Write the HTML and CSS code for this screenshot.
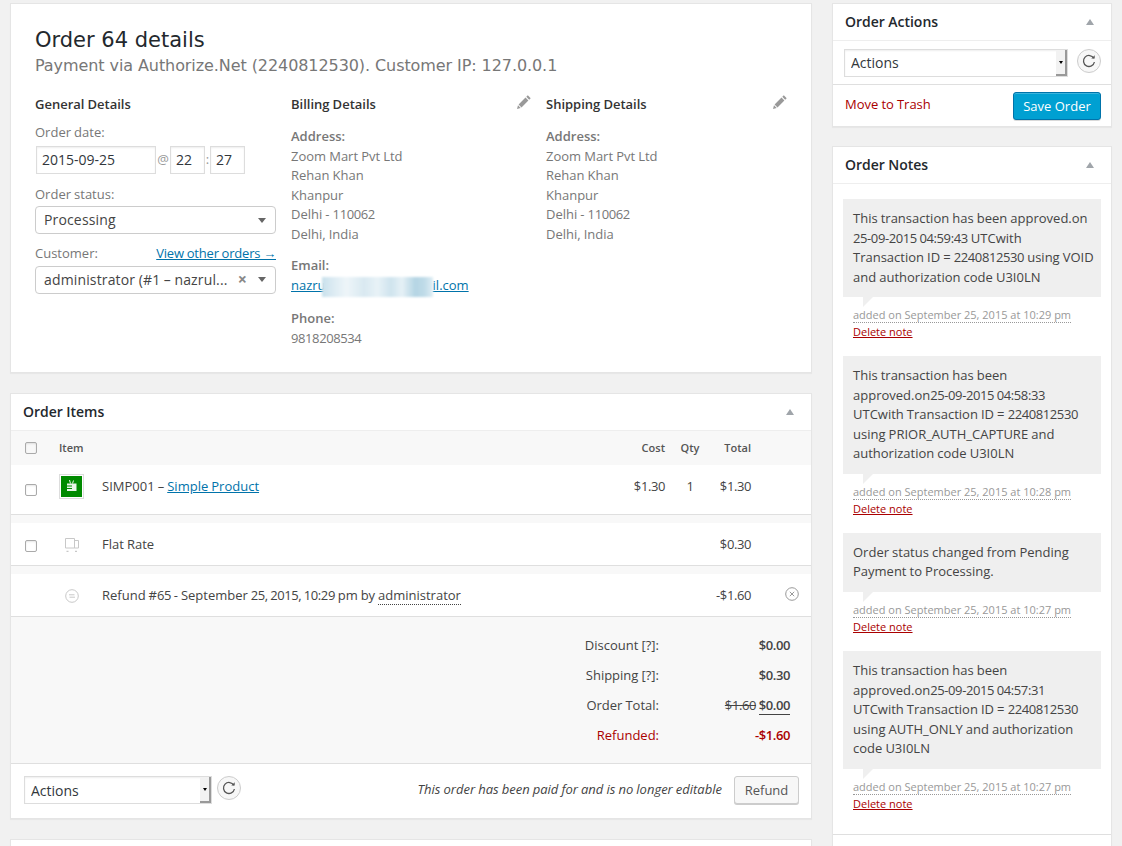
FILE: index.html
```html
<!DOCTYPE html>
<html lang="en">
<head>
  <meta charset="UTF-8" />
  <title>Edit Order</title>
  <meta name="viewport" content="width=device-width, initial-scale=1.0" />
  <link rel="stylesheet" href="styles.css">
</head>
<body>
  <div class="columns">
    <main class="col-main">

      <section class="card order-data">
        <h1>Order 64 details</h1>
        <p class="order-meta">Payment via Authorize.Net (2240812530). Customer IP: 127.0.0.1</p>
        <div class="data-cols">
          <div class="data-col">
            <h3>General Details</h3>
            <div class="lbl lbl-date">Order date:</div>
            <div class="date-row">
              <span class="text-input date-input">2015-09-25</span>
              <span class="sep">@</span>
              <span class="text-input time-input">22</span>
              <span class="sep sep-colon">:</span>
              <span class="text-input time-input">27</span>
            </div>
            <div class="lbl lbl-status">Order status:</div>
            <div class="select2">
              <span class="select2-text">Processing</span>
              <span class="select2-arrow"></span>
            </div>
            <div class="lbl lbl-customer">
              <span>Customer:</span>
              <a href="#" class="other-orders">View other orders →</a>
            </div>
            <div class="select2">
              <span class="select2-text">administrator (#1 – nazrul...</span>
              <span class="select2-clear">×</span>
              <span class="select2-arrow"></span>
            </div>
          </div>

          <div class="data-col">
            <h3>Billing Details
              <svg class="pencil" viewBox="0 0 14 14"><path d="M10.800.3l2.900 2.900-1.500 1.500-2.900-2.900zM8.500 2.600l2.900 2.900-6.900 6.900-2.900-2.900zM1 10.300l2.700 2.700L0 14z"/></svg>
            </h3>
            <p class="addr"><strong>Address:</strong><br>Zoom Mart Pvt Ltd<br>Rehan Khan<br>Khanpur<br>Delhi - <span class="num">110062</span><br>Delhi, India</p>
            <p class="addr"><strong>Email:</strong><br><a href="#">nazru<span class="blurred"></span>il.com</a></p>
            <p class="addr"><strong>Phone:</strong><br><span class="num">9818208534</span></p>
          </div>

          <div class="data-col">
            <h3>Shipping Details
              <svg class="pencil" viewBox="0 0 14 14"><path d="M10.800.3l2.900 2.900-1.500 1.500-2.900-2.900zM8.500 2.600l2.900 2.900-6.900 6.900-2.900-2.900zM1 10.300l2.700 2.700L0 14z"/></svg>
            </h3>
            <p class="addr"><strong>Address:</strong><br>Zoom Mart Pvt Ltd<br>Rehan Khan<br>Khanpur<br>Delhi - <span class="num">110062</span><br>Delhi, India</p>
          </div>
        </div>
      </section>

      <section class="card">
        <div class="card-head"><h2>Order Items</h2><span class="toggle"></span></div>

        <div class="row row-head">
          <span class="c-check"><span class="checkbox"></span></span>
          <span class="c-icon">Item</span>
          <span class="c-name"></span>
          <span class="c-cost">Cost</span>
          <span class="c-qty">Qty</span>
          <span class="c-total">Total</span>
          <span class="c-del"></span>
        </div>

        <div class="row row-product">
          <span class="c-check"><span class="checkbox"></span></span>
          <span class="c-icon">
            <span class="thumb">
              <svg viewBox="0 0 21 21" width="21" height="21"><rect width="21" height="21" fill="#008a00"/><path d="M6 7.500h9.500v7.500H6z" fill="#e8f5e8"/><path d="M8.500 4l1 3.500M12.500 4.500l-1 3" stroke="#e8f5e8" fill="none"/><path d="M6 10h5M6 12.500h5" stroke="#008a00"/></svg>
            </span>
          </span>
          <span class="c-name">SIMP001 – <a href="#">Simple Product</a></span>
          <span class="c-cost num">$1.30</span>
          <span class="c-qty num">1</span>
          <span class="c-total num">$1.30</span>
          <span class="c-del"></span>
        </div>

        <div class="row-gap"></div>

        <div class="row row-shipping">
          <span class="c-check"><span class="checkbox"></span></span>
          <span class="c-icon">
            <svg class="line-icon" viewBox="0 0 14 14" width="14" height="14"><path d="M.5.5h9v9.500H.5zM9.500 2.500h4V10h-4z"/><path d="M1.500 13.500h2M10 13.500h2" stroke-width="1.500"/></svg>
          </span>
          <span class="c-name">Flat Rate</span>
          <span class="c-cost"></span>
          <span class="c-qty"></span>
          <span class="c-total num">$0.30</span>
          <span class="c-del"></span>
        </div>

        <div class="row-gap"></div>

        <div class="row row-refund">
          <span class="c-check"></span>
          <span class="c-icon">
            <svg class="line-icon" viewBox="0 0 14 14" width="14" height="14"><circle cx="7" cy="7" r="6.300"/><path d="M4 5.800h5.500M4.500 8.200H10"/></svg>
          </span>
          <span class="c-name">Refund #<span class="num">65</span> - September <span class="num">25, 2015, 10:29</span> pm by <span class="abbr">administrator</span></span>
          <span class="c-cost"></span>
          <span class="c-qty"></span>
          <span class="c-total num">-$1.60</span>
          <span class="c-del">
            <svg class="del-icon" viewBox="0 0 14 14" width="14" height="14"><circle cx="7" cy="7" r="6.300"/><path d="M4.800 4.800l4.400 4.400M9.200 4.800l-4.400 4.400"/></svg>
          </span>
        </div>

        <div class="totals">
          <div class="total-row"><span class="t-label">Discount [?]:</span><b class="t-val num">$0.00</b></div>
          <div class="total-row"><span class="t-label">Shipping [?]:</span><b class="t-val num">$0.30</b></div>
          <div class="total-row"><span class="t-label">Order Total:</span><span class="t-val num"><del>$1.60</del> <b class="under">$0.00</b></span></div>
          <div class="total-row refunded"><span class="t-label">Refunded:</span><b class="t-val num">-$1.60</b></div>
        </div>

        <div class="items-foot">
          <span class="native-select foot-select"><select><option>Actions</option></select><i></i></span>
          <span class="reload">
            <svg viewBox="0 0 14 14" width="14" height="14"><path d="M11.800 4.300A5.500 5.500 0 1 0 12.400 8"/><path d="M9.300 4.600h3.400V1.200z" class="solid"/></svg>
          </span>
          <em class="locked">This order has been paid for and is no longer editable</em>
          <button class="btn btn-refund">Refund</button>
        </div>
      </section>

      <section class="card card-cut"></section>
    </main>

    <aside class="col-side">
      <section class="card">
        <div class="card-head"><h2>Order Actions</h2><span class="toggle"></span></div>
        <div class="actions-row">
          <span class="native-select side-select"><select><option>Actions</option></select><i></i></span>
          <span class="reload">
            <svg viewBox="0 0 14 14" width="14" height="14"><path d="M11.800 4.300A5.500 5.500 0 1 0 12.400 8"/><path d="M9.300 4.600h3.400V1.200z" class="solid"/></svg>
          </span>
        </div>
        <div class="actions-foot">
          <a href="#" class="trash">Move to Trash</a>
          <button class="btn btn-primary">Save Order</button>
        </div>
      </section>

      <section class="card notes-card">
        <div class="card-head"><h2>Order Notes</h2><span class="toggle"></span></div>
        <ul class="notes">
          <li>
            <div class="note-text">This transaction has been approved.on<br><span class="num">25-09-2015 04:59:43</span> UTCwith<br>Transaction ID = <span class="num">2240812530</span> using VOID<br>and authorization code U3I0LN</div>
            <p class="note-meta"><span class="abbr-time">added on September 25, 2015 at 10:29 pm</span><br><a href="#">Delete note</a></p>
          </li>
          <li>
            <div class="note-text">This transaction has been<br>approved.on<span class="num">25-09-2015 04:58:33</span><br>UTCwith Transaction ID = <span class="num">2240812530</span><br>using PRIOR_AUTH_CAPTURE and<br>authorization code U3I0LN</div>
            <p class="note-meta"><span class="abbr-time">added on September 25, 2015 at 10:28 pm</span><br><a href="#">Delete note</a></p>
          </li>
          <li>
            <div class="note-text">Order status changed from Pending<br>Payment to Processing.</div>
            <p class="note-meta"><span class="abbr-time">added on September 25, 2015 at 10:27 pm</span><br><a href="#">Delete note</a></p>
          </li>
          <li>
            <div class="note-text">This transaction has been<br>approved.on<span class="num">25-09-2015 04:57:31</span><br>UTCwith Transaction ID = <span class="num">2240812530</span><br>using AUTH_ONLY and authorization<br>code U3I0LN</div>
            <p class="note-meta"><span class="abbr-time">added on September 25, 2015 at 10:27 pm</span><br><a href="#">Delete note</a></p>
          </li>
        </ul>
        <div class="notes-add"></div>
      </section>
    </aside>
  </div>
</body>
</html>
```

FILE: styles.css
```css
html, body {
  margin: 0;
  height: 846px;
  overflow: hidden;
}

body {
  font-family: "Open Sans", sans-serif;
  font-size: 13px;
  line-height: 19.5px;
  word-spacing: -0.3px;
  color: #444;
  background: #f1f1f1;
}

a {
  color: #0073aa;
}

/* digits come out narrower in the original, about 7px each */
.num {
  letter-spacing: -0.4px;
}

.columns {
  display: flex;
  gap: 20px;
  padding: 3px 10px 0 10px;
  align-items: flex-start;
}

.col-main {
  width: 802px;
  flex: none;
}

.col-side {
  width: 280px;
  flex: none;
}

.card {
  background: #fff;
  border: 1px solid #e5e5e5;
  box-shadow: 0 1px 1px rgba(0, 0, 0, 0.04);
  margin-bottom: 20px;
}

.card-cut {
  height: 60px;
}

.card-head {
  display: flex;
  justify-content: space-between;
  align-items: center;
  height: 36px;
  padding: 0 12px;
  border-bottom: 1px solid #eee;
}

.card-head h2 {
  margin: 0;
  font-size: 14px;
  font-weight: 600;
  color: #23282d;
}

.toggle {
  width: 0;
  height: 0;
  border-left: 4.500px solid transparent;
  border-right: 4.500px solid transparent;
  border-bottom: 6px solid #a0a5aa;
  margin-right: 5px;
}

/* order data */
.order-data {
  height: 370px;
  box-sizing: border-box;
  padding: 23px 24px 0 24px;
}

.order-data h1 {
  margin: 0;
  font-family: "DejaVu Sans", sans-serif;
  font-size: 21px;
  font-weight: 400;
  line-height: 26px;
  word-spacing: 0;
  color: #23282d;
}

.order-meta {
  margin: 0;
  font-family: "DejaVu Sans", sans-serif;
  font-size: 16px;
  line-height: 26px;
  word-spacing: 0;
  letter-spacing: -0.08px;
  color: #777;
}

.data-cols {
  display: grid;
  grid-template-columns: 241px 240px 241px;
  gap: 15px;
  margin-top: 15px;
}

.data-col h3 {
  display: flex;
  justify-content: space-between;
  margin: 0 0 13px 0;
  font-size: 13px;
  line-height: 20px;
  font-weight: 600;
  color: #333;
}

.pencil {
  width: 14px;
  height: 14px;
  fill: #999;
  margin-top: 1px;
}

.lbl {
  color: #777;
  display: flex;
  justify-content: space-between;
}

.lbl-date {
  margin: -4px 0 3px;
}

.lbl-status {
  margin: 11px 0 2px;
}

.lbl-customer {
  margin: 10px 0 2px;
}

.other-orders {
  letter-spacing: -0.2px;
}

.date-row {
  display: flex;
  align-items: center;
  padding-left: 1px;
  color: #999;
}

.text-input {
  box-sizing: border-box;
  height: 28px;
  line-height: 26px;
  border: 1px solid #ddd;
  padding: 0 5px;
  font-size: 14px;
  color: #32373c;
  box-shadow: inset 0 1px 2px rgba(0, 0, 0, 0.07);
}

.date-input {
  width: 120px;
}

.time-input {
  width: 35px;
}

.sep {
  width: 14px;
  text-align: center;
  font-size: 13px;
}

.sep-colon {
  width: 5px;
}

.select2 {
  display: flex;
  align-items: center;
  box-sizing: border-box;
  height: 28px;
  border: 1px solid #ccc;
  border-radius: 4px;
  padding: 0 8px;
  font-size: 14px;
  color: #444;
}

.select2-text {
  flex: 1;
  white-space: nowrap;
  overflow: hidden;
  letter-spacing: 0.15px;
}

.select2-clear {
  font-weight: 700;
  color: #888;
  font-size: 16px;
  margin-right: 11px;
}

.select2-arrow {
  width: 0;
  height: 0;
  border-left: 4px solid transparent;
  border-right: 4px solid transparent;
  border-top: 5px solid #666;
  margin-right: 1px;
}

.addr {
  margin: 0 0 12.300px 0;
  color: #777;
}

.addr strong {
  font-weight: 600;
  color: #777;
}

.blurred {
  display: inline-block;
  width: 111px;
  height: 20px;
  vertical-align: -7px;
  margin-left: -4px;
  filter: blur(1px);
  background: linear-gradient(90deg, #c9e1ec 0, #dcebf3 10%, #eef5f9 22%, #d9e9f1 38%, #e8f2f7 50%, #cfe4ee 62%, #e6f1f6 72%, #b5d5e4 84%, #bfdbe8 92%, #dfeef5 100%);
}

/* items table */
.row {
  display: flex;
  align-items: center;
  background: #fff;
}

.row-head {
  height: 34px;
  background: #f8f8f8;
  font-size: 11px;
  font-weight: 600;
  color: #555;
}

.row-product {
  height: 49px;
  border-bottom: 1px solid #dfdfdf;
}

.row-product > span:not(.c-check) {
  margin-bottom: 6px;
}

.row-product .c-icon {
  margin-bottom: 4px;
}

.row-shipping,
.row-refund {
  box-sizing: border-box;
  height: 43px;
  padding-top: 2px;
  border-bottom: 1px solid #dfdfdf;
}

.row-gap {
  height: 8px;
  background: #f8f8f8;
}

.c-check {
  width: 48px;
  flex: none;
  padding-left: 14px;
  box-sizing: border-box;
  display: flex;
}

.c-icon {
  width: 43px;
  flex: none;
  display: flex;
}

.c-name {
  flex: 1;
}

.row-refund .c-name {
  word-spacing: -0.5px;
}

.c-cost {
  width: 60px;
  text-align: right;
}

.c-qty {
  width: 50px;
  text-align: center;
}

.c-total {
  width: 36px;
  text-align: right;
  white-space: nowrap;
}

.c-del {
  width: 60px;
  display: flex;
  justify-content: flex-end;
  padding-right: 12px;
  box-sizing: border-box;
}

.checkbox {
  width: 10px;
  height: 10px;
  border: 1px solid #aaa;
  border-radius: 2px;
  box-shadow: inset 0 1px 2px rgba(0, 0, 0, 0.1);
}

.row-shipping .checkbox {
  margin-top: 1px;
}

.thumb {
  display: flex;
  padding: 1px;
  border: 1px solid #ddd;
}

.line-icon {
  fill: none;
  stroke: #c8c8c8;
  margin-left: 6px;
}

.del-icon {
  fill: none;
  stroke: #999;
  margin-top: -5px;
}

.abbr {
  border-bottom: 1px dotted #444;
}

.totals {
  box-sizing: border-box;
  height: 147px;
  background: #f8f8f8;
  border-bottom: 1px solid #dfdfdf;
  padding: 13px 0 0 0;
}

.total-row {
  display: flex;
  justify-content: flex-end;
  height: 30px;
  line-height: 30px;
  padding-right: 21px;
}

.t-val {
  width: 131px;
  text-align: right;
  font-weight: 400;
}

b.t-val,
.under {
  font-weight: 600;
}

.under {
  border-bottom: 1px solid #444;
}

.refunded {
  color: #a00;
}

.items-foot {
  display: flex;
  align-items: center;
  height: 52px;
  padding: 0 12px 2px 13px;
}

.locked {
  margin-left: auto;
  margin-right: 12px;
}

.btn {
  box-sizing: border-box;
  height: 28px;
  padding: 0;
  font-family: inherit;
  font-size: 13px;
  white-space: nowrap;
  color: #555;
  background: #f7f7f7;
  border: 1px solid #ccc;
  border-radius: 3px;
  box-shadow: 0 1px 0 #ccc;
}

.btn-refund {
  width: 65px;
}

.btn-primary {
  width: 88px;
  color: #fff;
  background: #00a0d2;
  border-color: #0073aa;
  box-shadow: inset 0 1px 0 rgba(120, 200, 230, 0.5), 0 1px 0 rgba(0, 0, 0, 0.15);
}

.native-select {
  position: relative;
  display: inline-block;
  box-sizing: border-box;
  height: 28px;
}

.native-select select {
  appearance: none;
  box-sizing: border-box;
  width: 100%;
  height: 100%;
  padding: 0 6px;
  font-family: inherit;
  font-size: 14px;
  color: #32373c;
  background: #fff;
  border: 1px solid #ddd;
  border-radius: 0;
  box-shadow: inset 0 1px 2px rgba(0, 0, 0, 0.07);
}

.native-select i {
  position: absolute;
  top: 1px;
  right: 1px;
  bottom: 1px;
  width: 11px;
  box-sizing: border-box;
  background: #f2f2f2;
  border-right: 2px solid #999;
  border-bottom: 2px solid #999;
}

.native-select i::after {
  content: "";
  position: absolute;
  top: 11px;
  left: 3px;
  border-left: 2.500px solid transparent;
  border-right: 2.500px solid transparent;
  border-top: 3px solid #000;
}

.foot-select {
  width: 188px;
}

.side-select {
  width: 224px;
  flex: none;
}

.reload {
  box-sizing: border-box;
  display: flex;
  align-items: center;
  justify-content: center;
  width: 24px;
  height: 24px;
  flex: none;
  margin-left: 5px;
  margin-top: -4px;
  border: 1px solid #ccc;
  border-radius: 50%;
  background: #f7f7f7;
}

.reload svg {
  fill: none;
  stroke: #555;
  stroke-width: 1.300;
}

.reload .solid {
  fill: #555;
  stroke: none;
}

/* side */
.actions-row {
  display: flex;
  align-items: center;
  justify-content: space-between;
  height: 43px;
  padding: 0 10px 0 11px;
  border-bottom: 1px solid #dfdfdf;
}

.actions-foot {
  display: flex;
  justify-content: space-between;
  align-items: flex-start;
  height: 41px;
  padding: 7px 10px 0 12px;
  box-sizing: border-box;
}

.trash {
  color: #a00;
  text-decoration: none;
  margin-top: 3px;
}

.notes-card {
  margin-top: -1px;
  margin-bottom: 0;
}

.notes {
  list-style: none;
  margin: 0;
  padding: 15px 10px 6px 10px;
}

.notes li {
  margin-bottom: 16.200px;
}

.note-text {
  position: relative;
  padding: 10px;
  background: #efefef;
  white-space: nowrap;
}

.note-text::after {
  content: "";
  position: absolute;
  left: 20px;
  bottom: -10px;
  border-top: 10px solid #efefef;
  border-right: 10px solid transparent;
}

.note-meta {
  margin: 0;
  padding: 9px 10px 0;
  font-size: 11px;
  line-height: 17px;
  word-spacing: 0;
  color: #999;
}

.abbr-time {
  border-bottom: 1px dotted #999;
}

.note-meta a {
  color: #a00;
}

.notes-add {
  height: 40px;
  border-top: 1px solid #dfdfdf;
}
```
